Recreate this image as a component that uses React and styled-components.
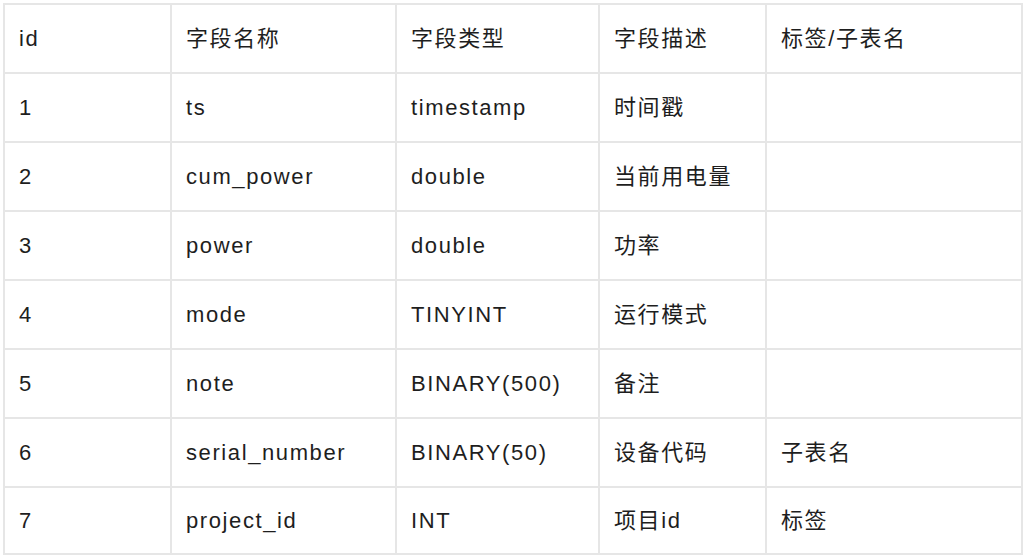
import React from 'react';
import styled, { createGlobalStyle } from 'styled-components';

const GlobalStyle = createGlobalStyle`
  html, body {
    margin: 0;
    padding: 0;
    background: #fff;
  }
`;

const Page = styled.div`
  padding: 3px;
  width: 1024px;
  box-sizing: border-box;
`;

const Table = styled.table`
  width: 1018px;
  border-collapse: collapse;
  table-layout: fixed;
  font-family: "Liberation Sans", "Noto Sans CJK SC", sans-serif;
  font-size: 22px;
  letter-spacing: 1.6px;
  color: #1e1e1e;
`;

const Row = styled.tr`
  height: ${({ $h }) => $h}px;
`;

const Cell = styled.td`
  border: 2px solid #e6e6e6;
  padding: 0 0 0 14px;
  vertical-align: middle;
  white-space: nowrap;
  text-align: left;
`;

// CJK glyphs sit lower than Latin ones in the fallback font, lift them a bit
const Text = styled.span`
  position: relative;
  top: ${({ $cjk }) => ($cjk ? '-3px' : '0')};
`;

const widths = [167, 225, 203, 167, 256];

const header = ['id', '字段名称', '字段类型', '字段描述', '标签/子表名'];

const rows = [
  ['1', 'ts', 'timestamp', '时间戳', ''],
  ['2', 'cum_power', 'double', '当前用电量', ''],
  ['3', 'power', 'double', '功率', ''],
  ['4', 'mode', 'TINYINT', '运行模式', ''],
  ['5', 'note', 'BINARY(500)', '备注', ''],
  ['6', 'serial_number', 'BINARY(50)', '设备代码', '子表名'],
  ['7', 'project_id', 'INT', '项目id', '标签'],
];

const hasCjk = (s) => /[\u4e00-\u9fff]/.test(s);

const App = () => {
  return (
    <Page>
      <GlobalStyle />
      <Table>
        <colgroup>
          {widths.map((w, i) => (
            <col key={i} style={{ width: w }} />
          ))}
        </colgroup>
        <tbody>
          <Row $h={69}>
            {header.map((h, i) => (
              <Cell key={i}>
                <Text $cjk={hasCjk(h)}>{h}</Text>
              </Cell>
            ))}
          </Row>
          {rows.map((r, i) => (
            <Row key={i} $h={i === rows.length - 1 ? 67 : 69}>
              {r.map((c, j) => (
                <Cell key={j}>
                  <Text $cjk={hasCjk(c)}>{c}</Text>
                </Cell>
              ))}
            </Row>
          ))}
        </tbody>
      </Table>
    </Page>
  );
};

export default App;
